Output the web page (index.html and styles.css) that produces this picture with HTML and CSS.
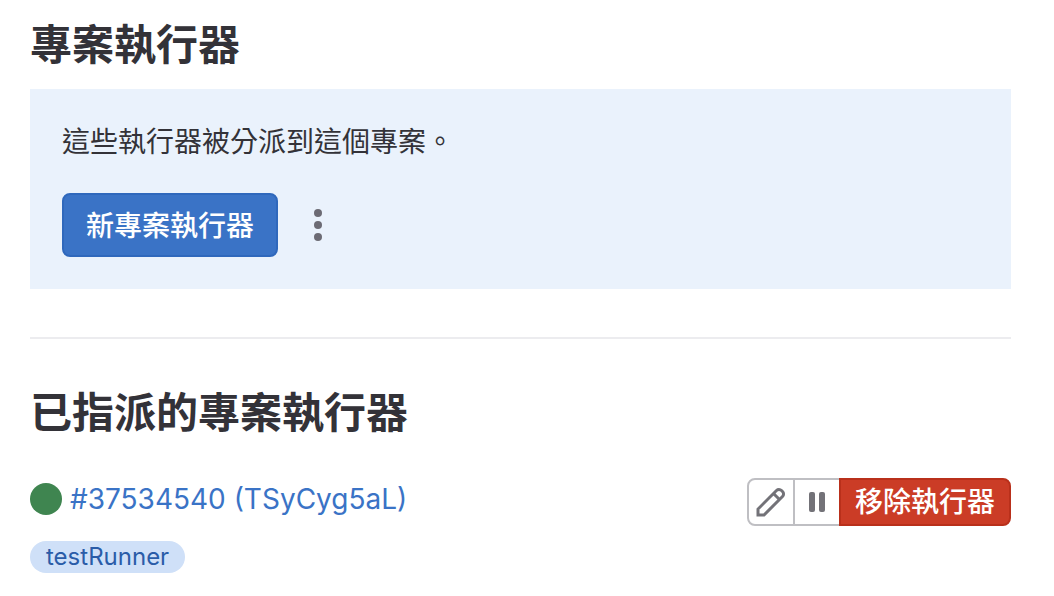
FILE: index.html
```html
<!DOCTYPE html>
<html lang="zh-Hant">
<head>
<meta charset="utf-8">
<meta name="viewport" content="width=device-width, initial-scale=1">
<title>專案執行器</title>
<link rel="stylesheet" href="styles.css">
</head>
<body>
<main class="page">
  <section class="intro">
    <h2 class="heading">專案執行器</h2>
    <div class="panel">
      <p class="panel-text">這些執行器被分派到這個專案。</p>
      <div class="panel-actions">
        <button class="btn-primary" type="button">新專案執行器</button>
        <button class="btn-more" type="button" aria-label="更多動作">
          <svg class="dots" viewBox="0 0 32 32" aria-hidden="true"><circle cx="16" cy="4" r="4"/><circle cx="16" cy="16" r="4"/><circle cx="16" cy="28" r="4"/></svg>
        </button>
      </div>
    </div>
  </section>
  <hr class="divider">
  <section class="assigned">
    <h2 class="heading">已指派的專案執行器</h2>
    <div class="runner">
      <div class="runner-info">
        <div class="runner-name">
          <span class="status"></span>
          <a class="runner-link" href="#runner">#37534540 (TSyCyg5aL)</a>
        </div>
        <span class="badge">testRunner</span>
      </div>
      <div class="btn-group">
        <button class="btn-icon" type="button" aria-label="編輯">
          <svg class="icon icon-edit" viewBox="0 0 32 32" aria-hidden="true"><path d="M3 29v-6L21.500 4.500a3.500 3.500 0 0 1 5 0l1 1a3.500 3.500 0 0 1 0 5L9 29zM18.500 7.500l6 6"/></svg>
        </button>
        <button class="btn-icon" type="button" aria-label="暫停">
          <svg class="icon" viewBox="0 0 32 32" aria-hidden="true"><rect x="8" y="6" width="6" height="20" rx="2"/><rect x="18" y="6" width="6" height="20" rx="2"/></svg>
        </button>
        <button class="btn-danger" type="button">移除執行器</button>
      </div>
    </div>
  </section>
</main>
</body>
</html>
```

FILE: styles.css
```css
* { box-sizing: border-box; }
body {
  margin: 0;
  background: #fff;
  color: #333238;
  font-family: Inter, "Noto Sans CJK TC", sans-serif;
  font-size: 28px;
}
.page { padding: 17px 43px 16px 30px; }
.heading { margin: 0; font-size: 42px; line-height: 56px; font-weight: 700; }
.panel { margin-top: 16px; padding: 32px; background: #eaf2fc; }
.panel-text { margin: 0; line-height: 42px; }
.panel-actions { display: flex; align-items: center; gap: 8px; margin-top: 30px; }
button { margin: 0; font: inherit; cursor: pointer; }
.btn-primary {
  height: 64px;
  padding: 0 22px 2px;
  border: 2px solid #2f68bc;
  border-radius: 8px;
  background: #3a73c6;
  color: #fff;
  font-weight: 500;
}
.btn-more { display: flex; align-items: center; justify-content: center; width: 64px; height: 64px; padding: 0; border: 0; background: none; }
.dots { width: 32px; height: 32px; fill: #6c6b74; }
.divider { height: 2px; margin: 48px 0 46px; border: 0; background: #ececef; }
.runner { display: flex; justify-content: space-between; align-items: flex-start; margin-top: 37px; }
.runner-info { display: flex; flex-direction: column; align-items: flex-start; gap: 21px; }
.runner-name { display: flex; align-items: center; gap: 8px; line-height: 42px; }
.status { width: 32px; height: 32px; border-radius: 50%; background: #3f8550; }
.runner-link { color: #3a73c6; text-decoration: none; }
.badge { padding: 0 16px; border-radius: 16px; background: #cfe0f8; color: #2a5ca8; font-size: 24px; line-height: 32px; }
.btn-group { display: flex; height: 48px; border-radius: 8px; }
.btn-icon { display: flex; align-items: center; justify-content: center; width: 48px; margin-right: -2px; padding: 0; border: 2px solid #bfbfc3; background: #fff; }
.btn-icon:first-child { border-radius: 8px 0 0 8px; }
.icon { flex: none; width: 32px; height: 32px; fill: #737278; }
.icon-edit { fill: none; stroke: #737278; stroke-width: 3px; }
.btn-danger { padding: 0 14px; border: 2px solid #b9301b; border-radius: 0 8px 8px 0; background: #cb3c26; color: #fff; font-weight: 500; line-height: 42px; }
```
